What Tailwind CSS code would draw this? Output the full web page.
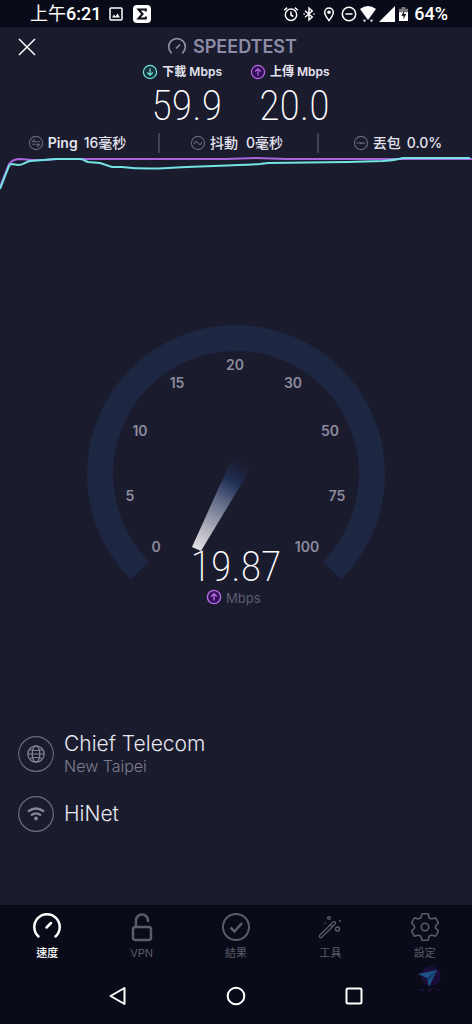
<!DOCTYPE html>
<html lang="zh-Hant">
<head>
<meta charset="utf-8">
<meta name="viewport" content="width=device-width, initial-scale=1">
<title>Speedtest</title>
<script src="https://cdn.jsdelivr.net/npm/@tailwindcss/browser@4"></script>
</head>
<body class="flex min-h-screen flex-col overflow-x-hidden bg-[#1b1b2e] font-['Inter','Noto_Sans_CJK_TC',sans-serif] text-white">

<!-- Status bar -->
<div class="flex h-[27px] items-center justify-between bg-[#0a0b18] pr-6 pl-[30px] font-['Roboto','Noto_Sans_CJK_TC',sans-serif]">
  <div class="flex items-center">
    <span class="text-lg leading-6">上午<span class="font-medium">6:21</span></span>
    <svg class="ml-2 h-3.5 w-3.5" viewBox="0 0 14 14"><rect x="1" y="1" width="12" height="12" rx="1" fill="none" stroke="#fff" stroke-width="1.5"/><path d="M3 10.500l2-3 1.500 2 2-3L11 10.500z" fill="#fff"/></svg>
    <svg class="ml-2.5 h-[18px] w-[18px]" viewBox="0 0 18 18"><rect width="18" height="18" rx="4" fill="#fff"/><path d="M12.800 6.500V4.500H5.500L9.500 9l-4 4.500h7.300v-2" fill="none" stroke="#0a0b18" stroke-width="2"/></svg>
  </div>
  <div class="flex items-center">
    <svg class="h-4 w-4" viewBox="0 0 16 16" fill="none" stroke="#fff" stroke-width="1.500"><circle cx="8" cy="8.700" r="5.700"/><path d="M8 5.500V9l2.300 1.500M1.200 4.200l2.900-2.600M14.800 4.200l-2.900-2.600"/></svg>
    <svg class="ml-0.5 h-4 w-4" viewBox="0 0 16 16" fill="none" stroke="#fff" stroke-width="1.400"><path d="M4 4.700l7.300 6.300L8 14V2l3.300 3L4 11.300"/><path d="M2.500 8h1.200M12.500 8h1.200"/></svg>
    <svg class="ml-1 h-4 w-4" viewBox="0 0 16 16"><path d="M8 14.500C5.500 11.500 3.700 9 3.700 6.300a4.300 4.300 0 018.600 0C12.300 9 10.500 11.500 8 14.500z" fill="none" stroke="#fff" stroke-width="1.500"/><circle cx="8" cy="6.200" r="1.800" fill="#fff"/></svg>
    <svg class="ml-1 h-4 w-4" viewBox="0 0 16 16" fill="none" stroke="#fff" stroke-width="1.500"><circle cx="8" cy="8" r="6.700"/><path d="M4.500 8h7"/></svg>
    <svg class="ml-0.5 h-[18px] w-[18px]" viewBox="0 0 18 18" fill="#fff"><path d="M1 4q8-6 16 0L9 15z"/><path d="M3.500 14.500h4l-2 3zM10.500 14.500h4l-2 3z" stroke="#0a0b18" stroke-width=".5"/></svg>
    <svg class="ml-0.5 h-4 w-4" viewBox="0 0 16 16" fill="#fff"><path d="M16 0v16H0z"/></svg>
    <svg class="ml-1 h-3.5 w-[9px]" viewBox="0 0 10 16" preserveAspectRatio="none"><path d="M3 0h4v2h3v5H0V2h3z" fill="#77787f"/><path d="M0 6h10v10H0z" fill="#fff"/><path d="M6 4L2.500 10H5v4l3-6H5.500z" fill="#0a0b18"/></svg>
    <span class="ml-1.5 text-lg leading-6 font-medium">64%</span>
  </div>
</div>

<!-- Title bar -->
<header class="grid h-9 grid-cols-[48px_1fr_48px] items-center pt-1">
  <button type="button" aria-label="Close" class="flex justify-end pr-3"><svg class="h-[18px] w-[18px]" viewBox="0 0 18 18" stroke="#fff" stroke-width="1.500"><path d="M1 1l16 16M17 1L1 17"/></svg></button>
  <h1 class="flex items-center justify-center gap-1.5 pr-2 text-lg leading-6 font-semibold text-[#8c8ca6]">
    <svg class="h-5 w-5" viewBox="0 0 20 20" fill="none" stroke="currentColor" stroke-width="1.700"><path d="M4.800 16.300a8.300 8.300 0 1110.400 0M9 11.500l4-4"/></svg>
    SPEEDTEST
  </h1>
</header>

<!-- Download and upload -->
<section class="flex justify-center gap-7">
  <div class="flex flex-col items-end">
    <h2 class="flex h-[18px] items-center gap-1 text-xs font-semibold text-[#e4e4ee]">
      <svg class="h-4 w-4" viewBox="0 0 16 16" fill="#17343f" stroke="#6fe3dc" stroke-width="1.200"><circle cx="8" cy="8" r="6.600"/><path d="M8 4.500v6.500M5.200 8.500L8 11.200l2.800-2.700" fill="none"/></svg>
      <span>下載 Mbps</span>
    </h2>
    <p class="font-['Roboto_Condensed','Liberation_Sans_Narrow',Roboto,sans-serif] text-[42px] leading-[50px] font-extralight">59.9</p>
  </div>
  <div class="flex flex-col items-end">
    <h2 class="flex h-[18px] items-center gap-1 text-xs font-semibold text-[#e4e4ee]">
      <svg class="h-4 w-4" viewBox="0 0 16 16" fill="#35105a" stroke="#b36ae0" stroke-width="1.200"><circle cx="8" cy="8" r="6.600"/><path d="M8 11.500V5M5.200 7.500L8 4.800l2.800 2.700" fill="none"/></svg>
      <span>上傳 Mbps</span>
    </h2>
    <p class="font-['Roboto_Condensed','Liberation_Sans_Narrow',Roboto,sans-serif] text-[42px] leading-[50px] font-extralight">20.0</p>
  </div>
</section>

<!-- Latency -->
<section class="mt-0.5 grid grid-cols-[160fr_159fr_153fr] divide-x-2 divide-[#3f4053] text-sm leading-5 font-medium text-[#e4e4ee]">
  <div class="flex items-center justify-center gap-1 pr-1">
    <svg class="h-4 w-4 shrink-0" viewBox="0 0 16 16" fill="none" stroke="#66667c" stroke-width="1.100"><circle cx="8" cy="8" r="6.600"/><path d="M12 6.700H4.500L7 4.200M4 9.300h7.500L9 11.800"/></svg>
    <span class="mr-0.5 font-semibold">Ping</span><span>16毫秒</span>
  </div>
  <div class="flex items-center justify-center gap-1 pr-1">
    <svg class="h-4 w-4 shrink-0" viewBox="0 0 16 16" fill="none" stroke="#66667c" stroke-width="1.100"><circle cx="8" cy="8" r="6.600"/><path d="M4 9c1-3 2.500-3 4-1s3 2 4-1"/></svg>
    <span class="mr-1">抖動</span><span>0毫秒</span>
  </div>
  <div class="flex items-center justify-center gap-1 pl-1">
    <svg class="h-4 w-4 shrink-0" viewBox="0 0 16 16" fill="none" stroke="#66667c" stroke-width="1.100"><circle cx="8" cy="8" r="6.600"/><path d="M3.500 8h3M9.500 8h3M6.500 7l1.500 2M9.500 9L8 7"/></svg>
    <span class="mr-0.5">丟包</span><span>0.0%</span>
  </div>
</section>

<!-- Throughput over time -->
<svg class="mt-0.5 h-10 w-full shrink-0" viewBox="0 0 472 40" preserveAspectRatio="none" fill="none" stroke-width="2" aria-hidden="true">
  <path d="M0 32L9 9q4-5 11-5l12 1h12l12-1h90l80 0 30-1 30 1h195" stroke="#a764dc"/>
  <path d="M0 34L9 11q1-2 3-2l6 1c5 0 7-3 12-4l14-1 12-1 24 0c3 0 5 2 8 3l12 1 12 4h10c16 2 30 2 46 1 30-2 60-2 92-4l8-1 80-1 35-1c12-1 17-2 20-3h67" stroke="#74e3e4"/>
</svg>

<!-- Gauge -->
<main class="flex flex-1 flex-col items-center justify-center pt-2">
  <svg class="w-[300px] max-w-full" viewBox="0 0 300 288" role="img" aria-label="19.87 Mbps">
    <defs>
      <linearGradient id="needle" gradientUnits="userSpaceOnUse" x1="156" y1="135" x2="107" y2="226">
        <stop offset="0" stop-color="#1b2442" stop-opacity="0"/>
        <stop offset=".25" stop-color="#223258"/>
        <stop offset=".45" stop-color="#5e6785"/>
        <stop offset=".75" stop-color="#afb0bb"/>
        <stop offset="1" stop-color="#e6e6e8"/>
      </linearGradient>
    </defs>
    <path d="M53.800 246.200a136 136 0 11192.400 0" fill="none" stroke="#1e2742" stroke-width="26"/>
    <g class="fill-[#8b8b9d] text-sm font-semibold" text-anchor="middle">
      <text x="70" y="228">0</text>
      <text x="44" y="177">5</text>
      <text x="54" y="112">10</text>
      <text x="91" y="64">15</text>
      <text x="149" y="46">20</text>
      <text x="207" y="64">30</text>
      <text x="244" y="112">50</text>
      <text x="251" y="177">75</text>
      <text x="221" y="228">100</text>
    </g>
    <path d="M148 130l20 9-53 88-9-4z" fill="url(#needle)"/>
    <text class="fill-white font-['Roboto_Condensed','Liberation_Sans_Narrow',Roboto,sans-serif] text-[42px] font-extralight" x="150" y="257" text-anchor="middle">19.87</text>
    <g transform="translate(120 265)" fill="#35105a" stroke="#b36ae0" stroke-width="1.400"><circle cx="8" cy="8" r="6.600"/><path d="M8 11.500V5M5.200 7.500L8 4.800l2.800 2.700" fill="none"/></g>
    <text class="fill-[#5d5d70] text-[13px]" x="140" y="279">Mbps</text>
  </svg>
</main>

<!-- Server and provider -->
<section class="flex flex-col gap-5 px-[18px] pb-[73px]">
  <div class="flex items-center gap-2.5">
    <svg class="h-9 w-9 shrink-0" viewBox="0 0 36 36" fill="none" stroke="#85859a" stroke-width="1.200"><circle cx="18" cy="18" r="17.300" stroke="#6b6b80"/><circle cx="18" cy="18" r="8.200"/><ellipse cx="18" cy="18" rx="3.800" ry="8.200"/><path d="M10 18h16M11.500 13.500q6.500 2 13 0M11.500 22.500q6.500-2 13 0"/></svg>
    <div class="font-light">
      <p class="text-[21px] leading-6 text-[#e8e8f0]">Chief Telecom</p>
      <p class="text-base leading-5 text-[#7d7d90]">New Taipei</p>
    </div>
  </div>
  <div class="flex items-center gap-2.5">
    <svg class="h-9 w-9 shrink-0" viewBox="0 0 36 36" fill="none" stroke="#85859a" stroke-width="2.200"><circle cx="18" cy="18" r="17.300" stroke="#6b6b80" stroke-width="1.200"/><path d="M10 15.500q8-6 16 0M13 19.300q5-4 10 0"/><circle cx="18" cy="22.500" r="1.900" fill="#85859a" stroke="none"/></svg>
    <p class="text-[21px] leading-6 font-light text-[#e8e8f0]">HiNet</p>
  </div>
</section>

<!-- App tabs -->
<nav class="grid grid-cols-5 bg-[#0a0b18] pt-1.5 text-[11px] leading-4 text-[#5b5c6b]">
  <a href="#speed" class="flex flex-col items-center gap-0.5 font-medium text-white">
    <svg class="h-8 w-8" viewBox="0 0 32 32" fill="none" stroke="currentColor" stroke-width="2.500" stroke-linecap="round"><path d="M7.500 25.500a12.700 12.700 0 1117 0M15.500 16.500l4.500-4.500"/></svg>速度</a>
  <a href="#vpn" class="flex flex-col items-center gap-0.5">
    <svg class="h-8 w-8" viewBox="0 0 32 32" fill="none" stroke="currentColor" stroke-width="2.500" stroke-linecap="round"><rect x="7" y="16" width="18" height="13" rx="2.500"/><path d="M10 16V9.500a6 6 0 0112 0V10"/></svg>VPN</a>
  <a href="#results" class="flex flex-col items-center gap-0.5">
    <svg class="h-8 w-8" viewBox="0 0 32 32" fill="none" stroke="currentColor" stroke-width="2"><circle cx="16" cy="16" r="13"/><path d="M10.500 16.500l4 4 7.500-8.500" stroke-width="2.500"/></svg>結果</a>
  <a href="#tools" class="flex flex-col items-center gap-0.5">
    <svg class="h-8 w-8" viewBox="0 0 32 32" fill="none" stroke="currentColor" stroke-width="1.300"><path d="M5.500 24.500L19 11q1.500-.8 2.300.3.700 1-.3 2L7.500 26.500q-2.500.5-2-2zM16.500 13.500l2 2"/><circle cx="15" cy="7" r="1.400"/><circle cx="23.500" cy="18" r="2"/><circle cx="26" cy="10" r="1" fill="currentColor" stroke="none"/><circle cx="11" cy="12" r=".8" fill="currentColor" stroke="none"/></svg>工具</a>
  <a href="#settings" class="flex flex-col items-center gap-0.5">
    <svg class="h-8 w-8" viewBox="0 0 32 32" fill="none" stroke="currentColor" stroke-width="1.600" stroke-linejoin="round"><path d="M13.500 2.800h5q.8 0 .9.800.2 3.400 2 4t4.300-.6q.8-.3 1.300.4l2.200 4q.3.700-.3 1.200-2.600 1.900-2.600 3.400t2.600 3.400q.6.500.3 1.200l-2.200 4q-.5.700-1.300.4-2.500-1.200-4.300-.6t-2 4q-.1.800-.9.800h-5q-.8 0-.9-.8-.2-3.400-2-4t-4.300.6q-.8.300-1.300-.4l-2.200-4q-.3-.7.3-1.200 2.600-1.900 2.600-3.400t-2.600-3.400q-.6-.5-.3-1.200l2.200-4q.5-.7 1.300-.4 2.500 1.200 4.300.6t2-4q.1-.8.9-.8z"/><circle cx="16" cy="16" r="3.700"/></svg>設定</a>
</nav>

<!-- System navigation -->
<div class="relative bg-[#0a0b18] pt-[25px] pb-[18px]">
  <div class="mx-auto grid w-3/4 grid-cols-3 justify-items-center">
    <button type="button" aria-label="Back"><svg class="h-5 w-5" viewBox="0 0 20 20" fill="none" stroke="#fff" stroke-width="2" stroke-linejoin="round"><path d="M16.500 2v16L2.500 10z"/></svg></button>
    <button type="button" aria-label="Home"><svg class="h-5 w-5" viewBox="0 0 20 20" fill="none" stroke="#fff" stroke-width="2"><circle cx="10" cy="10" r="8.300"/></svg></button>
    <button type="button" aria-label="Recent apps"><svg class="h-5 w-5" viewBox="0 0 20 20" fill="none" stroke="#fff" stroke-width="2"><rect x="2.500" y="2.500" width="15" height="15" rx="1.500"/></svg></button>
  </div>
  <svg class="absolute top-1 right-7 h-7 w-7" viewBox="0 0 28 28" aria-hidden="true"><circle cx="15" cy="11" r="10" fill="#1b0d38"/><path d="M2 9l19-4-8 17-2-9z" fill="#1b5288"/><path d="M21 5l-10 8 1 4z" fill="#123a68"/><path d="M4 25h4M12 25h4M20 25h4" stroke="#1b0d38" stroke-width="2"/></svg>
</div>
</body>
</html>
